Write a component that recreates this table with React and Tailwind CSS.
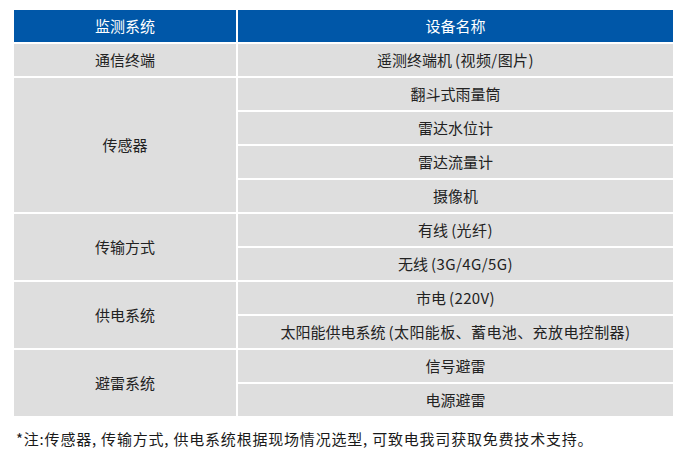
import React from "react";

const rows = [
  { group: "通信终端", items: ["遥测终端机(视频/图片)"] },
  { group: "传感器", items: ["翻斗式雨量筒", "雷达水位计", "雷达流量计", "摄像机"] },
  { group: "传输方式", items: ["有线(光纤)", "无线(3G/4G/5G)"] },
  { group: "供电系统", items: ["市电(220V)", "太阳能供电系统(太阳能板、蓄电池、充放电控制器)"] },
  { group: "避雷系统", items: ["信号避雷", "电源避雷"] },
];

const spans = { 1: "row-span-1", 2: "row-span-2", 4: "row-span-4" };

// the source gives the opening bracket some air on its left
const Label = ({ text }) => {
  const i = text.indexOf("(");
  if (i < 0) return <span>{text}</span>;
  return (
    <span>
      {text.slice(0, i)}
      <span className="ml-[3px] tracking-[0.4px]">{text.slice(i)}</span>
    </span>
  );
};

export default function App() {
  return (
    <div
      className="w-[689px] h-[465px] bg-white pt-[10px] pl-[14px]"
      style={{ fontFamily: '"Noto Sans CJK SC", "Noto Sans", sans-serif' }}
    >
      <div className="w-[659px] grid grid-cols-[222px_1fr] auto-rows-[32px] gap-[2px] bg-white">
        <div className="bg-[#0057a8] text-white text-[15px] flex items-center justify-center">
          监测系统
        </div>
        <div className="bg-[#0057a8] text-white text-[15px] flex items-center justify-center">
          设备名称
        </div>
        {rows.map((r) => (
          <React.Fragment key={r.group}>
            <div
              className={`${spans[r.items.length]} bg-[#dedede] text-[#222] text-[15px] flex items-center justify-center`}
            >
              {r.group}
            </div>
            {r.items.map((it) => (
              <div
                key={it}
                className="col-start-2 bg-[#dedede] text-[#222] text-[15px] flex items-center justify-center"
              >
                <Label text={it} />
              </div>
            ))}
          </React.Fragment>
        ))}
      </div>
      <p className="mt-[12px] ml-[2px] text-[15px] text-[#1a1a1a] leading-[22px] tracking-[0.8px]">
        *注:传感器, 传输方式, 供电系统根据现场情况选型, 可致电我司获取免费技术支持。
      </p>
    </div>
  );
}
